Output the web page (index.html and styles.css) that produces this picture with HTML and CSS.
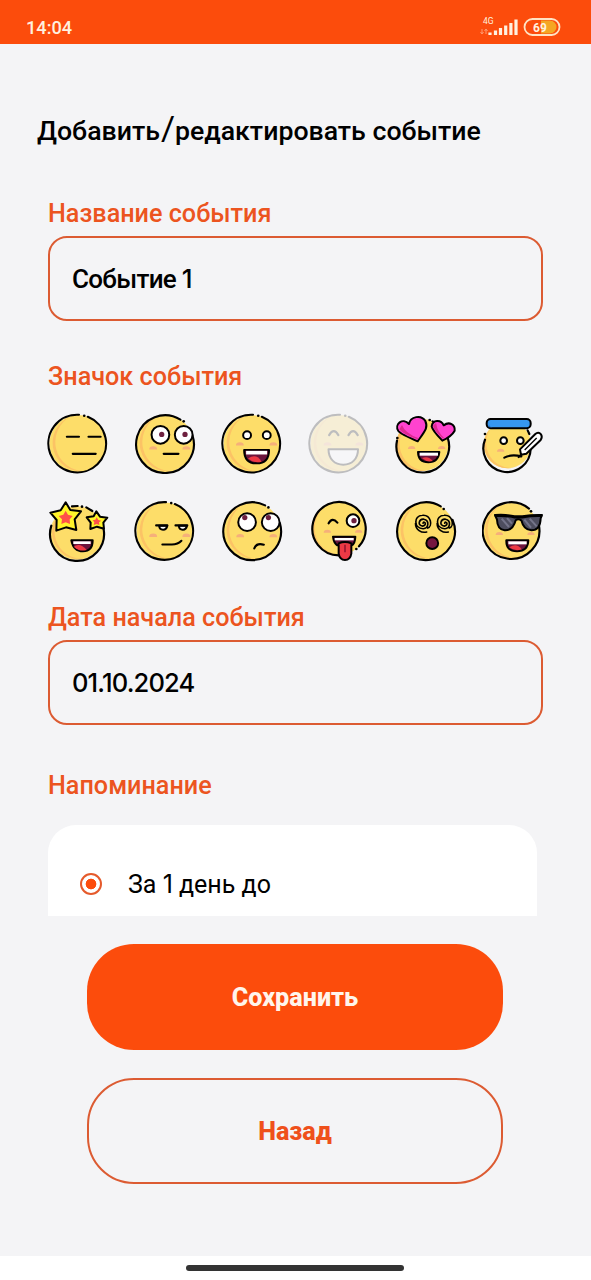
FILE: index.html
```html
<!DOCTYPE html>
<html lang="ru">
<head>
<meta charset="utf-8">
<title>Событие</title>
<link rel="stylesheet" href="styles.css">
</head>
<body>
<header class="status">
  <span class="clock">14:04</span>
  <svg class="indicators" width="84" height="30" viewBox="0 0 84 30">
    <text class="network" x="5" y="12">4G</text>
    <path class="faint" d="M4 17v5M2.500 20l1.500 2 1.500-2M8 22v-5M6.500 19l1.500-2 1.500 2"/>
    <path class="bars" d="M12 20.500v2.500M17.500 18.500v4.500M22.500 16v7M27.700 13.500v9.500M32.900 11v12M38 7.500v15.500"/>
    <path d="M63 8.500h9a6.500 6.500 0 0 1 0 13h-9z" fill="#f5a623"/>
    <rect x="46.500" y="7" width="35" height="16" rx="8" fill="none" stroke="#ffe3c4" stroke-width="1.800"/>
    <text class="charge" x="62" y="19.500" text-anchor="middle">69</text>
  </svg>
</header>
<main class="screen">
  <h1 class="title">Добавить<span class="slash">/</span>редактировать событие</h1>
  <form class="form">
    <label class="label">Название события</label>
    <div class="field"><span class="value">Событие <span class="digits">1</span></span></div>
    <label class="label label-icons">Значок события</label>
    <div class="icons">
      <svg class="emoji" viewBox="19.500 19.500 189 189">
        <circle class="face" cx="114" cy="116" r="87"/><path class="shade" d="M91 33A87 87 0 0 0 134 200A89 89 0 0 1 91 33Z"/>
        <path class="line" d="M117 28A88 88 0 1 0 144 34M80 95H117M146 95H183M98 147H168"/><circle cx="133" cy="31" r="4"/>
      </svg>
      <svg class="emoji" viewBox="280.500 19.500 189 189">
        <circle class="face" cx="375" cy="116" r="87"/><path class="shade" d="M352 33A87 87 0 0 0 395 200A89 89 0 0 1 352 33Z"/>
        <path class="line" d="M422 43A88 88 0 1 0 459 91M371 147H416"/><circle cx="432" cy="48" r="4"/>
        <circle class="eye" cx="361" cy="89" r="27"/><circle class="eye" cx="432" cy="89" r="27"/><circle class="iris" cx="365" cy="88" r="8"/><circle class="iris" cx="436" cy="88" r="8"/>
        <path class="blush" d="M327 134a12 10 0 0 1 24 0zM428 134a12 10 0 0 1 24 0z"/>
      </svg>
      <svg class="emoji" viewBox="31.500 19.500 189 189">
        <circle class="face" cx="126" cy="116" r="87"/><path class="shade" d="M103 33A87 87 0 0 0 146 200A89 89 0 0 1 103 33Z"/>
        <path class="line" d="M129 28A88 88 0 1 0 156 34"/><circle cx="145" cy="31" r="4"/>
        <circle class="eye" cx="111" cy="90" r="12"/><circle class="eye" cx="171" cy="90" r="12"/>
        <path class="blush" d="M77 122a12 10 0 0 1 24 0zM179 122a12 10 0 0 1 24 0z"/>
        <path class="mouth" d="M102 135H178C178 164 163 176 140 176S102 164 102 135Z"/><path fill="#fff" d="M108 138H172V149H108Z"/><path class="tongue" d="M114 161Q140 144 155 171Q132 177 114 161Z"/>
      </svg>
      <svg class="emoji selected" viewBox="292.500 19.500 189 189">
        <circle class="face" cx="387" cy="116" r="87"/><path class="shade" d="M364 33A87 87 0 0 0 407 200A89 89 0 0 1 364 33Z"/>
        <path class="line" d="M390 28A88 88 0 1 0 417 34M357 90Q371 66 385 90M416 90Q430 66 444 90"/><circle cx="406" cy="31" r="4"/>
        <path class="blush" d="M340 122a12 10 0 0 1 24 0zM437 122a12 10 0 0 1 24 0z"/>
        <path class="eye" d="M355 133H445C445 163 426 180 400 180S355 163 355 133Z"/>
      </svg>
      <svg class="emoji" viewBox="30 21 186 186">
        <circle class="face" cx="112" cy="120" r="78"/><path class="shade" d="M82 48A78 78 0 0 0 130 196A80 80 0 0 1 82 48Z"/>
        <path class="line" d="M36 107A79 79 0 1 0 188 98M143 49L150 53"/><circle cx="37" cy="99" r="4"/><circle cx="134" cy="45" r="4"/>
        <path class="heart" d="M98 109Q48 88 40 78C27 58 53 36 72 57C76 34 109 28 121 48C130 68 120 78 98 109Z"/>
        <path class="heart" d="M172 107Q142 76 140 64C143 44 168 43 176 61C193 48 211 59 209 77C202 90 191 98 172 107Z"/>
        <path class="heart-shade" d="M43 73Q55 88 97 103L101 100Q60 85 51 60ZM144 62Q148 78 174 101L177 98Q158 83 153 54Z"/>
        <path class="blush" d="M69 132a11 9 0 0 1 22 0zM159 132a11 9 0 0 1 22 0z"/>
        <path class="mouth" d="M99 141H163Q160 172 130 172T99 141Z"/><path fill="#fff" d="M104 143H159V152H104Z"/><path class="tongue" d="M111 159Q131 151 143 168Q126 173 111 159Z"/>
      </svg>
      <svg class="emoji" viewBox="291 21 186 186">
        <circle class="face" cx="367" cy="119" r="71"/><path class="shade" d="M320 67A71 71 0 0 0 380 189A75 75 0 0 1 320 67Z"/>
        <path class="line" d="M300 104A71 71 0 1 0 437 132M428 76L433 87"/><circle cx="300" cy="87" r="4"/>
        <rect class="outline" x="305" y="42" width="132" height="28" rx="12" fill="#3697f0"/><path d="M311 46Q307 66 323 67H311Z" fill="#236fc0"/>
        <circle class="eye" cx="356" cy="107" r="10"/><circle class="eye" cx="406" cy="107" r="10"/>
        <path class="blush" d="M336 140a11 9 0 0 1 22 0z"/>
        <path class="line" d="M358 158Q378 147 409 154M401 156L418 141"/>
        <path class="outline" fill="#fff" d="M408 149L405 133L451 87Q460 79 468 88Q473 96 467 105L424 146Z"/><path class="thin" d="M419 135L455 99"/>
      </svg>
      <svg class="emoji" viewBox="21 24 186 186">
        <circle class="face" cx="111" cy="123" r="80"/><path class="shade" d="M80 50A80 80 0 0 0 130 200A82 82 0 0 1 80 50Z"/>
        <path class="line" d="M34 101A81 81 0 1 0 191 112M96 43L113 42M139 46L157 57"/><circle cx="126" cy="44" r="4"/>
        <path class="star" d="M77 31L91 54L123 58L104 82L109 114L78 106L49 116L50 84L31 62L62 55Z"/><path class="star-core" d="M77 56L84 68L98 72L89 82L90 96L77 91L64 96L66 82L56 72L70 68Z"/>
        <path class="star" d="M169 58L180 74L202 77L190 92L192 110L171 104L151 111L152 92L140 76L161 73Z"/><path class="star-core" d="M170 76L175 84L184 86L177 91L178 99L170 96L161 99L163 91L158 85L166 83Z"/>
        <path class="mouth" d="M94 145H158Q158 178 129 178T94 145Z"/><path fill="#fff" d="M100 148H152V156H100Z"/><path class="tongue" d="M101 164Q120 150 140 174Q119 180 101 164Z"/>
      </svg>
      <svg class="emoji" viewBox="280.500 22.500 189 189">
        <circle class="face" cx="375" cy="117" r="87"/><path class="shade" d="M352 34A87 87 0 0 0 395 201A89 89 0 0 1 352 34Z"/>
        <path class="line" d="M378 29A88 88 0 1 0 405 35"/><circle cx="394" cy="32" r="4"/>
        <path class="eye" d="M357 101H382Q380 113 369 113T357 101ZM417 101H442Q440 113 429 113T417 101Z"/>
        <path class="line" d="M348 100H382M407 100H443M367 158H390Q413 160 425 147"/>
        <path class="blush" d="M327 135a12 10 0 0 1 24 0zM428 135a12 10 0 0 1 24 0z"/>
      </svg>
      <svg class="emoji" viewBox="31.500 22.500 189 189">
        <circle class="face" cx="126" cy="117" r="87"/><path class="shade" d="M103 34A87 87 0 0 0 146 201A89 89 0 0 1 103 34Z"/>
        <path class="line" d="M166 39A88 88 0 1 0 211 93M133 170Q140 152 162 159"/><circle cx="176" cy="45" r="4"/>
        <circle class="eye" cx="111" cy="90" r="27"/><circle class="eye" cx="183" cy="90" r="27"/><circle class="iris" cx="104" cy="76" r="8"/><circle class="iris" cx="176" cy="76" r="8"/>
        <path class="blush" d="M78 136a12 10 0 0 1 24 0zM179 136a12 10 0 0 1 24 0z"/>
      </svg>
      <svg class="emoji" viewBox="294 24 186 186">
        <circle class="face" cx="386" cy="110" r="80"/><path class="shade" d="M362 34A80 80 0 0 0 394 189A81 81 0 0 1 362 34Z"/>
        <path class="line" d="M387 190A80 80 0 1 1 447 163M356 94Q367 74 382 92"/><circle cx="439" cy="171" r="4"/>
        <circle class="eye" cx="429" cy="86" r="19"/><circle class="iris" cx="432" cy="86" r="8"/>
        <path class="blush" d="M341 122a11 9 0 0 1 22 0zM435 122a11 9 0 0 1 22 0z"/>
        <path class="mouth" d="M369 134H436Q435 157 425 160H382Q371 153 369 134Z"/><path fill="#fff" d="M374 138H431V145H374Z"/>
        <path class="outline tongue" d="M386 154Q405 146 424 154V185Q421 204 405 204T386 185Z"/><path d="M405 158V181" stroke="#9b1732" stroke-width="5"/>
      </svg>
      <svg class="emoji" viewBox="28.500 22.500 189 189">
        <circle class="face" cx="123" cy="117" r="87"/><path class="shade" d="M100 34A87 87 0 0 0 143 201A89 89 0 0 1 100 34Z"/>
        <path class="line" d="M168 42A88 88 0 1 0 204 83"/><circle cx="177" cy="50" r="4"/>
        <path class="spiral" d="M114 93C118 84 128 99 113 102C96 101 101 80 116 81C135 84 131 111 114 110C86 109 84 70 112 69C139 67 144 103 128 108M125 120C109 124 91 113 91 94"/>
        <path class="spiral" d="M180 93C184 84 194 99 179 102C162 101 167 80 182 81C201 84 197 111 180 110C152 109 150 70 178 69C205 67 210 103 194 108M191 120C175 124 157 113 157 94"/>
        <circle class="outline" cx="142" cy="154" r="18" fill="#76163f"/>
      </svg>
      <svg class="emoji" viewBox="291 24 186 186">
        <circle class="face" cx="379" cy="117" r="84"/><path class="shade" d="M350 38A84 84 0 0 0 395 198A86 86 0 0 1 350 38Z"/>
        <path class="line" d="M432 50A85 85 0 1 0 462 101"/><circle cx="438" cy="58" r="4"/>
        <path class="outline" fill="#4d4d5f" d="M330 69Q367 67 388 73H412Q442 68 471 69L467 79Q466 115 439 115Q416 114 409 85Q399 79 392 85Q384 116 359 115Q337 112 336 83Z"/>
        <path d="M350 80L372 105M434 80L455 103M366 78L381 95M418 83L438 107" stroke="#74748a" stroke-width="6"/><path class="line" d="M332 72Q367 70 389 76H411Q439 71 469 72"/>
        <path class="blush" d="M332 129a11 9 0 0 1 22 0zM427 129a11 9 0 0 1 22 0z"/>
        <path class="mouth" d="M364 145H430Q429 178 396 178T364 145Z"/><path fill="#fff" d="M370 148H425V157H370Z"/><path class="tongue" d="M373 166Q395 151 410 172Q391 180 373 166Z"/>
      </svg>
    </div>
    <label class="label label-date">Дата начала события</label>
    <div class="field"><span class="value digits date">01.10.2024</span></div>
    <label class="label label-remind">Напоминание</label>
    <div class="options">
      <span class="radio"></span>
      <span class="option">За <span class="digits">1</span> день до</span>
    </div>
  </form>
  <div class="actions">
    <button class="button primary">Сохранить</button>
    <button class="button secondary">Назад</button>
  </div>
</main>
<footer class="nav"><span class="handle"></span></footer>
</body>
</html>
```
FILE: styles.css
```css
* { box-sizing: border-box; }
body { margin: 0; width: 591px; height: 1280px; display: flex; flex-direction: column; overflow: hidden; background: #f4f4f6; color: #000; font-family: Roboto, "Noto Sans", sans-serif; }
.status { height: 44px; flex: none; background: #fc4c0c; display: flex; justify-content: space-between; align-items: flex-start; padding: 12px 29px 0 26px; color: #fff0df; }
.clock { font-size: 18.200px; font-weight: 500; line-height: 32px; }
.indicators { font-weight: 500; fill: #fff0df; }
.network { font-size: 8.500px; font-weight: 400; }
.charge { font-size: 12px; font-weight: 700; }
.faint { fill: none; stroke: #ff9a70; stroke-width: 1; }
.bars { stroke: #fff0df; stroke-width: 3.200; }
.screen { flex: 1; }
.title { margin: 67px 0 0 37px; height: 40px; font-size: 26.700px; line-height: 40px; font-weight: 500; white-space: nowrap; }
.slash { display: inline-block; font-size: 34px; line-height: 30px; font-weight: 400; padding: 0 0 0 1px; }
.form { display: flex; flex-direction: column; padding: 48px 48px 0; }
.label { font-size: 25.200px; line-height: 30px; font-weight: 500; color: #ec5420; }
.field { margin-top: 7px; height: 85px; border: 2px solid #dc5b32; border-radius: 19px; display: flex; align-items: center; padding-left: 22px; }
.value { font-size: 26px; font-weight: 500; letter-spacing: -.7px; }
.digits { font-family: Inter, sans-serif; }
.date { font-size: 25.500px; letter-spacing: -.85px; }
.label-icons { margin-top: 41px; }
.icons { margin: 20px -1px 0; display: grid; grid-template-columns: repeat(6, 62px); gap: 26px 25px; }
.emoji { width: 62px; height: 62px; }
.selected { opacity: .22; }
.face { fill: #fddd69; }
.shade { fill: #fcc365; }
.line { fill: none; stroke: #000; stroke-width: 6.500; stroke-linecap: round; }
.thin { fill: none; stroke: #000; stroke-width: 4; }
.outline { stroke: #000; stroke-width: 6; stroke-linejoin: round; }
.eye { fill: #fff; stroke: #000; stroke-width: 6; stroke-linejoin: round; }
.iris { fill: #6e203f; }
.blush { fill: #f6b07a; }
.mouth { fill: #6c143c; stroke: #000; stroke-width: 6; stroke-linejoin: round; }
.tongue { fill: #ed3945; }
.heart { fill: #ff43cf; stroke: #000; stroke-width: 6; stroke-linejoin: round; }
.heart-shade { fill: #de2b91; }
.star { fill: #fff32a; stroke: #000; stroke-width: 6; stroke-linejoin: round; }
.star-core { fill: #ff5149; }
.spiral { fill: none; stroke: #000; stroke-width: 5; stroke-linecap: round; }
.label-date { margin-top: 41px; }
.label-remind { margin-top: 46px; }
.options { margin-top: 24px; width: 489px; height: 91px; background: #fff; border-radius: 28px 28px 0 0; display: flex; align-items: center; gap: 26px; padding: 27px 0 0 32px; }
.radio { width: 22px; height: 22px; border: 2px solid #e55a2b; border-radius: 50%; background: radial-gradient(circle, #fc4c0c 5px, transparent 5.700px); }
.option { font-size: 25px; }
.actions { display: flex; flex-direction: column; gap: 28px; padding: 28px 88px 0 87px; }
.button { height: 106px; border: 0; border-radius: 47px; font-family: inherit; font-size: 25.200px; font-weight: 800; }
.primary { background: #fc4c0c; color: #fff5ec; }
.secondary { background: transparent; border: 2px solid #dc5b32; color: #ef501b; }
.nav { height: 24px; flex: none; background: #fff; display: flex; justify-content: flex-start; padding: 9px 0 0 186px; }
.handle { width: 218px; height: 6px; border-radius: 3px; background: #333; }
```
